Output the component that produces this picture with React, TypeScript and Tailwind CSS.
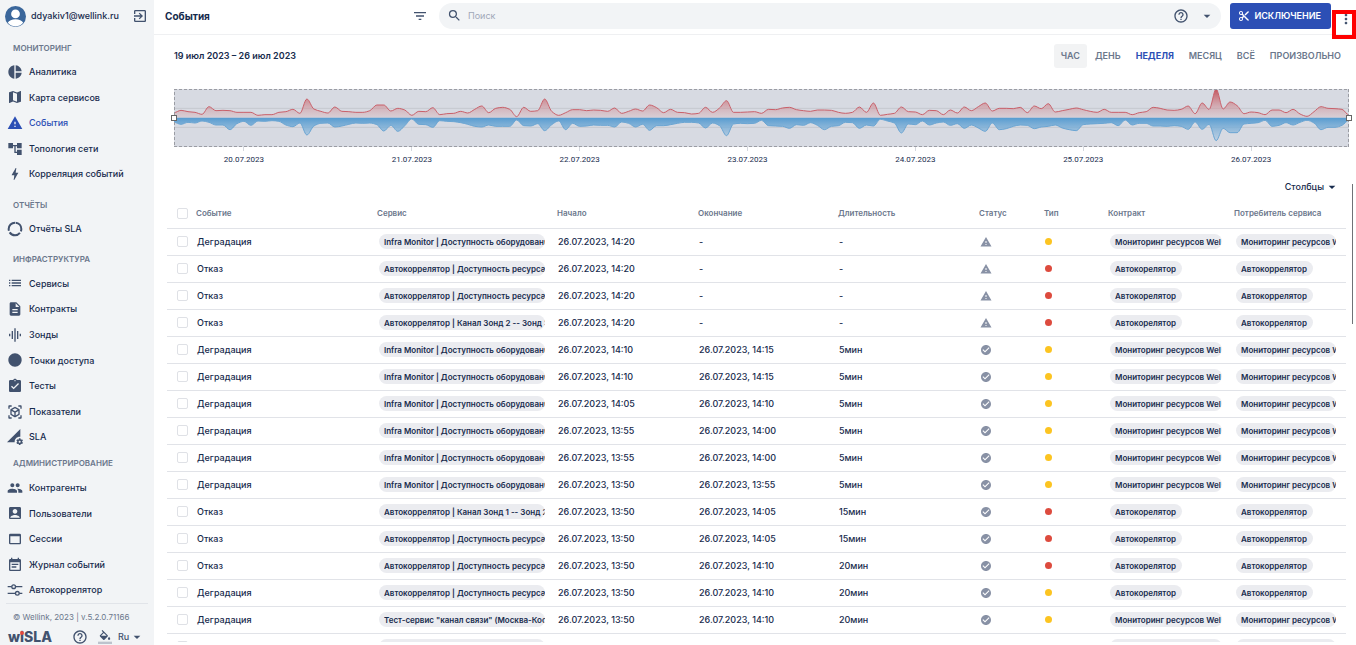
import { useState } from "react";
import type { IconType } from "react-icons";
import {
  MdAccountBox,
  MdAccountTree,
  MdArrowDropDown,
  MdAssignmentTurnedIn,
  MdBolt,
  MdCheckCircle,
  MdContentCut,
  MdDescription,
  MdEventNote,
  MdExitToApp,
  MdFilterList,
  MdGraphicEq,
  MdHelpOutline,
  MdLens,
  MdList,
  MdMap,
  MdMoreVert,
  MdPeople,
  MdPermDataSetting,
  MdPieChart,
  MdSearch,
  MdViewInAr,
  MdWarning,
  MdWebAsset,
} from "react-icons/md";

function RingIcon({ className }: { className?: string }) {
  return (
    <svg viewBox="0 0 24 24" fill="none" stroke="currentColor" strokeWidth="3" className={className}>
      <circle cx="12" cy="12" r="9.5" strokeDasharray="17.4 2.5" strokeDashoffset="-1" transform="rotate(-90 12 12)" />
    </svg>
  );
}

function SlidersIcon({ className }: { className?: string }) {
  return (
    <svg viewBox="0 0 24 24" fill="none" stroke="currentColor" strokeWidth="2" className={className}>
      <path d="M1 7h6M13 7h10M1 17h11.5M18.5 17H23" />
      <circle cx="10" cy="7" r="2.8" />
      <circle cx="15.5" cy="17" r="2.8" />
    </svg>
  );
}

function FillIcon({ className }: { className?: string }) {
  return (
    <svg viewBox="0 0 24 24" fill="currentColor" className={className}>
      <path d="M16.56 8.94 7.62 0 6.21 1.41l2.38 2.38-5.15 5.15a1.49 1.49 0 0 0 0 2.12l5.5 5.5c.29.29.68.44 1.06.44s.77-.15 1.06-.44l5.5-5.5c.59-.58.59-1.53 0-2.12zM5.21 10 10 5.21 14.79 10H5.21zM19 11.5s-2 2.17-2 3.5c0 1.1.9 2 2 2s2-.9 2-2c0-1.33-2-3.5-2-3.5z" />
      <path d="M0 20h24v4H0z" fillOpacity=".3" />
    </svg>
  );
}

type NavIcon = IconType | typeof RingIcon;

const sections: { title: string; gap: string; items: [string, NavIcon][] }[] = [
  {
    title: "Мониторинг",
    gap: "mt-1",
    items: [
      ["Аналитика", MdPieChart],
      ["Карта сервисов", MdMap],
      ["События", MdWarning],
      ["Топология сети", MdAccountTree],
      ["Корреляция событий", MdBolt],
    ],
  },
  { title: "Отчёты", gap: "mt-1.5", items: [["Отчёты SLA", RingIcon]] },
  {
    title: "Инфраструктура",
    gap: "mt-1.5",
    items: [
      ["Сервисы", MdList],
      ["Контракты", MdDescription],
      ["Зонды", MdGraphicEq],
      ["Точки доступа", MdLens],
      ["Тесты", MdAssignmentTurnedIn],
      ["Показатели", MdViewInAr],
      ["SLA", MdPermDataSetting],
    ],
  },
  {
    title: "Администрирование",
    gap: "mt-0.5",
    items: [
      ["Контрагенты", MdPeople],
      ["Пользователи", MdAccountBox],
      ["Сессии", MdWebAsset],
      ["Журнал событий", MdEventNote],
      ["Автокоррелятор", SlidersIcon],
    ],
  },
];

const periods = ["Час", "День", "Неделя", "Месяц", "Всё", "Произвольно"];

const days = ["20.07.2023", "21.07.2023", "22.07.2023", "23.07.2023", "24.07.2023", "25.07.2023", "26.07.2023"];

// hourly values, one per hour of the week
const opened = [
  15, 22, 18, 16, 10, 33, 21, 22, 21, 16, 16, 16, 7, 9, 9, 16, 18, 25, 13, 56, 26, 19, 14, 32, 19, 18, 16, 16, 21, 38,
  38, 20, 28, 23, 7, 19, 18, 30, 9, 12, 13, 19, 14, 25, 35, 15, 28, 31, 25, 3, 31, 19, 21, 56, 19, 7, 15, 24, 24, 21,
  23, 22, 19, 29, 13, 19, 26, 20, 38, 30, 15, 25, 16, 15, 11, 13, 31, 16, 29, 51, 16, 16, 17, 18, 13, 25, 24, 29, 31,
  24, 21, 19, 23, 23, 22, 16, 13, 16, 32, 16, 44, 7, 10, 13, 32, 18, 17, 9, 22, 21, 9, 23, 14, 32, 21, 33, 44, 20, 28,
  28, 27, 31, 15, 35, 27, 42, 17, 21, 25, 29, 24, 19, 16, 25, 16, 16, 16, 9, 15, 18, 31, 28, 23, 22, 25, 35, 12, 44,
  25, 86, 26, 47, 36, 12, 17, 15, 9, 23, 23, 15, 25, 11, 4, 18, 33, 28, 27, 25, 8,
];
const closed = [
  14, 20, 14, 16, 10, 14, 22, 22, 36, 18, 11, 23, 10, 11, 9, 11, 22, 27, 16, 52, 25, 17, 16, 28, 25, 20, 16, 17, 16,
  21, 40, 23, 41, 24, 4, 20, 21, 29, 9, 11, 12, 15, 20, 26, 28, 22, 26, 26, 26, 7, 24, 25, 18, 39, 21, 10, 36, 17, 26,
  25, 22, 23, 23, 28, 13, 17, 28, 20, 38, 24, 24, 21, 17, 14, 14, 16, 31, 16, 24, 54, 19, 17, 18, 17, 8, 24, 25, 26,
  32, 21, 23, 15, 23, 36, 26, 24, 14, 15, 32, 22, 25, 5, 10, 16, 46, 19, 21, 10, 22, 16, 13, 23, 18, 32, 22, 31, 41,
  16, 36, 33, 26, 22, 23, 33, 28, 26, 22, 31, 36, 39, 21, 19, 18, 17, 15, 24, 7, 22, 17, 17, 25, 25, 26, 24, 26, 35,
  13, 35, 20, 69, 32, 45, 45, 19, 17, 15, 8, 26, 23, 15, 22, 14, 8, 16, 36, 29, 29, 23, 8,
];

const STEP = 21;
const BASE = 86;
const CHART_W = STEP * 168;

// monotone cubic through the points, flat at every local extremum
function curve(values: number[], dir: 1 | -1) {
  const ys = values.map((v) => BASE + dir * v);
  const slope = ys.map((y, i) => {
    if (i === 0 || i === ys.length - 1) return 0;
    const a = y - ys[i - 1];
    const b = ys[i + 1] - y;
    return a * b <= 0 ? 0 : (2 * a * b) / (a + b);
  });
  let d = `M0 ${ys[0]}`;
  for (let i = 1; i < ys.length; i++) {
    const x = i * STEP;
    d += `C${x - 14} ${ys[i - 1] + slope[i - 1] / 3} ${x - 7} ${ys[i] - slope[i] / 3} ${x} ${ys[i]}`;
  }
  return d;
}

type Row = { kind: "deg" | "fail"; service: string; start: string; end: string; duration: string };

const INFRA = "Infra Monitor | Доступность оборудовани";
const RESOURCE = "Автокоррелятор | Доступность ресурса с";

const rows: Row[] = [
  { kind: "deg", service: INFRA, start: "14:20", end: "", duration: "-" },
  { kind: "fail", service: RESOURCE, start: "14:20", end: "", duration: "-" },
  { kind: "fail", service: RESOURCE, start: "14:20", end: "", duration: "-" },
  { kind: "fail", service: "Автокоррелятор | Канал Зонд 2 -- Зонд 3", start: "14:20", end: "", duration: "-" },
  { kind: "deg", service: INFRA, start: "14:10", end: "14:15", duration: "5мин" },
  { kind: "deg", service: INFRA, start: "14:10", end: "14:15", duration: "5мин" },
  { kind: "deg", service: INFRA, start: "14:05", end: "14:10", duration: "5мин" },
  { kind: "deg", service: INFRA, start: "13:55", end: "14:00", duration: "5мин" },
  { kind: "deg", service: INFRA, start: "13:55", end: "14:00", duration: "5мин" },
  { kind: "deg", service: INFRA, start: "13:50", end: "13:55", duration: "5мин" },
  { kind: "fail", service: "Автокоррелятор | Канал Зонд 1 -- Зонд 2", start: "13:50", end: "14:05", duration: "15мин" },
  { kind: "fail", service: RESOURCE, start: "13:50", end: "14:05", duration: "15мин" },
  { kind: "fail", service: RESOURCE, start: "13:50", end: "14:10", duration: "20мин" },
  { kind: "deg", service: RESOURCE, start: "13:50", end: "14:10", duration: "20мин" },
  { kind: "deg", service: 'Тест-сервис "канал связи" (Москва-Кос', start: "13:50", end: "14:10", duration: "20мин" },
  { kind: "deg", service: INFRA, start: "13:50", end: "14:10", duration: "20мин" },
];

const isAuto = (row: Row) => row.service.startsWith("Автокоррелятор");

function Chip({ text }: { text: string }) {
  return (
    <span className="inline-flex h-[15px] max-w-full items-center overflow-hidden rounded-full bg-[#ebecf0] pl-[5px] align-middle text-[8px] font-semibold">
      <span className="overflow-hidden pr-1.5 whitespace-nowrap">{text}</span>
    </span>
  );
}

function Checkbox({ label }: { label: string }) {
  return (
    <input
      type="checkbox"
      aria-label={label}
      className="block size-[11px] appearance-none rounded-[2px] border border-[#dfe1e6] bg-white checked:bg-[#2c4fb5]"
    />
  );
}

function Sidebar() {
  return (
    <aside className="flex w-[154px] shrink-0 flex-col bg-[#f2f4f6]">
      <div className="flex h-8 shrink-0 items-center pr-1.5 pl-[5px]">
        <svg viewBox="0 0 24 24" className="size-[21px] shrink-0">
          <circle cx="12" cy="12" r="12" fill="#3a669b" />
          <circle cx="12" cy="9" r="5" fill="#fff" />
          <path d="M3.2 19.2C4.5 16.4 8 15 12 15s7.5 1.4 8.8 4.2A11.3 11.3 0 0 1 12 23.3a11.3 11.3 0 0 1-8.8-4.1Z" fill="#fff" />
        </svg>
        <span className="ml-[5px] flex-1 text-[9px] font-medium">ddyakiv1@wellink.ru</span>
        <button type="button" aria-label="Выйти" className="text-[#42526e]">
          <MdExitToApp className="size-4" />
        </button>
      </div>

      <nav className="flex min-h-0 flex-1 flex-col">
        {sections.map((section) => (
          <div key={section.title} className="contents">
            <h2
              className={`${section.gap} flex h-[23px] shrink-0 items-center pl-[13px] text-[8px] font-semibold text-[#6b778c] uppercase`}
            >
              {section.title}
            </h2>
            {section.items.map(([label, Icon]) => (
              <a
                key={label}
                href="#"
                className={`flex min-h-0 flex-1 items-center gap-1.5 pl-[7px] text-[9px] font-medium ${
                  label === "События" ? "text-[#2c4fb5]" : ""
                }`}
              >
                <Icon className={`size-4 shrink-0 ${label === "События" ? "" : "text-[#42526e]"}`} />
                {label}
              </a>
            ))}
          </div>
        ))}
      </nav>

      <div className="mr-1.5 ml-1.5 flex h-[42px] shrink-0 flex-col overflow-hidden border-t border-[#e1e4e9]">
        <p className="flex h-[25px] shrink-0 items-center pl-[7px] text-[8px] text-[#6b778c]">
          © Wellink, 2023 | v.5.2.0.71166
        </p>
        <div className="flex h-4 shrink-0 items-center pl-0.5 text-[#42526e]">
          <span className="relative text-[14px] leading-4 font-extrabold">
            wiSLA
            <span className="absolute top-[2px] left-[12px] size-[4px] rounded-full bg-[#e5483d]" />
          </span>
          <button type="button" aria-label="Справка" className="ml-5">
            <MdHelpOutline className="size-4" />
          </button>
          <button type="button" aria-label="Тема" className="ml-2.5">
            <FillIcon className="size-[14px]" />
          </button>
          <button type="button" className="ml-1.5 flex items-center text-[9px] font-medium">
            Ru
            <MdArrowDropDown className="size-4" />
          </button>
        </div>
      </div>
    </aside>
  );
}

function TopBar() {
  return (
    <header className="flex h-[35px] shrink-0 items-center border-b border-[#eff0f2] pb-[3px] pl-[11px]">
      <div className="mr-[11px] flex w-[263px] shrink-0 items-center justify-between">
        <h1 className="text-[10px] leading-4 font-bold">События</h1>
        <button type="button" aria-label="Фильтр" className="text-[#42526e]">
          <MdFilterList className="size-4" />
        </button>
      </div>
      <div className="flex h-[26px] min-w-0 flex-1 items-center rounded-full bg-[#f2f4f6] pr-1.5 pl-2 text-[#42526e]">
        <MdSearch className="size-[15px]" />
        <input
          type="text"
          aria-label="Поиск"
          placeholder="Поиск"
          className="ml-1.5 min-w-0 flex-1 bg-transparent text-[9px] outline-none placeholder:text-[#a0a7b8]"
        />
        <button type="button" aria-label="Справка по поиску">
          <MdHelpOutline className="size-4" />
        </button>
        <button type="button" aria-label="Параметры поиска" className="ml-2.5">
          <MdArrowDropDown className="size-4" />
        </button>
      </div>
      <button
        type="button"
        className="ml-[9px] flex h-[26px] shrink-0 items-center gap-1 rounded-[3px] bg-[#2c4fb5] pr-2.5 pl-2 text-[9px] font-semibold text-white uppercase"
      >
        <MdContentCut className="size-3" />
        Исключение
      </button>
      <div className="relative ml-px h-[26px] w-6 shrink-0">
        <button type="button" aria-label="Ещё" className="absolute top-2 left-1.5 text-[#42526e]">
          <MdMoreVert className="size-4" />
        </button>
        <span className="pointer-events-none absolute top-[7px] left-0 h-[29px] w-6 border-4 border-[#ff0000]" />
      </div>
    </header>
  );
}

function Timeline() {
  const up = curve(opened, -1);
  const down = curve(closed, 1);
  const close = `V${BASE}H0Z`;

  return (
    <div className="mt-[21px] mr-[7px] ml-5">
      <div className="relative">
        <svg viewBox={`0 0 ${CHART_W} 174`} preserveAspectRatio="none" className="block h-[58px] w-full bg-[#d7dae2]">
          <defs>
            <linearGradient id="up" gradientUnits="userSpaceOnUse" x1="0" y1="0" x2="0" y2={BASE}>
              <stop offset="0" stopColor="#c0424b" stopOpacity="0.9" />
              <stop offset="1" stopColor="#d8a9ae" stopOpacity="0.25" />
            </linearGradient>
            <linearGradient id="down" gradientUnits="userSpaceOnUse" x1="0" y1={BASE} x2="0" y2="160">
              <stop offset="0" stopColor="#569bd0" />
              <stop offset="1" stopColor="#a9c8e2" stopOpacity="0.5" />
            </linearGradient>
          </defs>
          <path d={`M0 58H${CHART_W}M0 115H${CHART_W}`} stroke="#c6c8cf" vectorEffect="non-scaling-stroke" />
          <path d={up + close} fill="url(#up)" />
          <path d={down + close} fill="url(#down)" />
          <path d={up} fill="none" stroke="#c9606a" vectorEffect="non-scaling-stroke" />
          <path d={down} fill="none" stroke="#6aa5d3" vectorEffect="non-scaling-stroke" />
          <rect
            width={CHART_W}
            height="174"
            fill="none"
            stroke="#9a9ca3"
            strokeWidth="2"
            strokeDasharray="3 2"
            vectorEffect="non-scaling-stroke"
          />
        </svg>
        <button
          type="button"
          aria-label="Начало периода"
          className="absolute top-[26px] -left-[3px] size-1.5 border border-[#666666] bg-white"
        />
        <button
          type="button"
          aria-label="Конец периода"
          className="absolute top-[26px] -right-[3px] size-1.5 border border-[#666666] bg-white"
        />
      </div>
      <div className="mr-3.5 -ml-3.5 flex">
        {days.map((day) => (
          <div key={day} className="flex flex-1 flex-col items-center font-['Roboto','Liberation_Sans',sans-serif] text-[8px]">
            <span className="h-1 w-px bg-[#d5d8de]" />
            <span className="mt-[3px] leading-3">{day}</span>
          </div>
        ))}
      </div>
    </div>
  );
}

function EventsTable() {
  return (
    <table className="w-full table-fixed border-collapse text-left">
      <colgroup>
        <col className="w-[29px]" />
        <col className="w-[181px]" />
        <col className="w-[180px]" />
        <col className="w-[141px]" />
        <col className="w-[140px]" />
        <col className="w-[141px]" />
        <col className="w-[65px]" />
        <col className="w-[64px]" />
        <col className="w-[126px]" />
        <col className="w-[112px]" />
      </colgroup>
      <thead>
        <tr className="h-[29px] border-b border-[#e1e3e8] text-[8px] text-[#6b778c]">
          <th className="pl-2.5">
            <Checkbox label="Выбрать все" />
          </th>
          <th className="font-semibold">Событие</th>
          <th className="font-semibold">Сервис</th>
          <th className="font-semibold">Начало</th>
          <th className="font-semibold">Окончание</th>
          <th className="font-semibold">Длительность</th>
          <th className="font-semibold">Статус</th>
          <th className="font-semibold">Тип</th>
          <th className="font-semibold">Контракт</th>
          <th className="font-semibold">Потребитель сервиса</th>
        </tr>
      </thead>
      <tbody>
        {rows.map((row, i) => (
          <tr key={i} className="h-[27px] border-b border-[#e1e3e8] text-[9px] leading-3 font-medium">
            <td className="pl-2.5">
              <Checkbox label={`Выбрать событие ${i + 1}`} />
            </td>
            <td className="pl-px">{row.kind === "deg" ? "Деградация" : "Отказ"}</td>
            <td className="pr-3 pl-0.5">
              <Chip text={row.service} />
            </td>
            <td className="pl-px">26.07.2023, {row.start}</td>
            <td className="pl-px">{row.end ? `26.07.2023, ${row.end}` : "-"}</td>
            <td className="pl-px">{row.duration}</td>
            <td className="pl-px text-[#8891a5]">
              {row.end ? <MdCheckCircle className="size-3" /> : <MdWarning className="size-3" />}
            </td>
            <td className="pl-px">
              <span
                className={`block size-[7px] rounded-full ${row.kind === "deg" ? "bg-[#fcc421]" : "bg-[#dd4b3e]"}`}
              />
            </td>
            <td className="pr-3 pl-0.5">
              <Chip text={isAuto(row) ? "Автокорелятор" : "Мониторинг ресурсов Wel"} />
            </td>
            <td className="pr-2.5 pl-0.5">
              <Chip text={isAuto(row) ? "Автокоррелятор" : "Мониторинг ресурсов W"} />
            </td>
          </tr>
        ))}
      </tbody>
    </table>
  );
}

export default function App() {
  const [period, setPeriod] = useState("Неделя");

  return (
    <div className="flex h-screen overflow-hidden bg-white font-['Inter','Liberation_Sans',sans-serif] text-[#172b4d]">
      <Sidebar />
      <div className="relative flex min-w-0 flex-1 flex-col pb-[3px]">
        <TopBar />
        <div className="mt-[9px] flex h-6 shrink-0 items-center justify-between pr-2 pl-5">
          <p className="text-[9px] font-semibold">19 июл 2023 – 26 июл 2023</p>
          <div className="flex h-full gap-px">
            {periods.map((name) => (
              <button
                key={name}
                type="button"
                onClick={() => setPeriod(name)}
                className={`rounded-[3px] px-[7px] text-[9px] uppercase ${
                  name === period ? "font-bold text-[#2c4fb5]" : "font-semibold text-[#6b778c]"
                } ${name === "Час" ? "bg-[#f2f3f4]" : ""}`}
              >
                {name}
              </button>
            ))}
          </div>
        </div>
        <Timeline />
        <div className="mt-[13px] flex shrink-0 justify-end pr-4">
          <button type="button" className="flex items-center text-[9px] leading-4 font-medium">
            Столбцы
            <MdArrowDropDown className="size-4" />
          </button>
        </div>
        <div className="mt-1 min-h-0 flex-1 overflow-hidden pr-[11px] pl-[13px]">
          <EventsTable />
        </div>
        <span className="absolute top-[184px] right-[3px] h-[140px] w-px bg-[#6f7277]" />
      </div>
    </div>
  );
}
